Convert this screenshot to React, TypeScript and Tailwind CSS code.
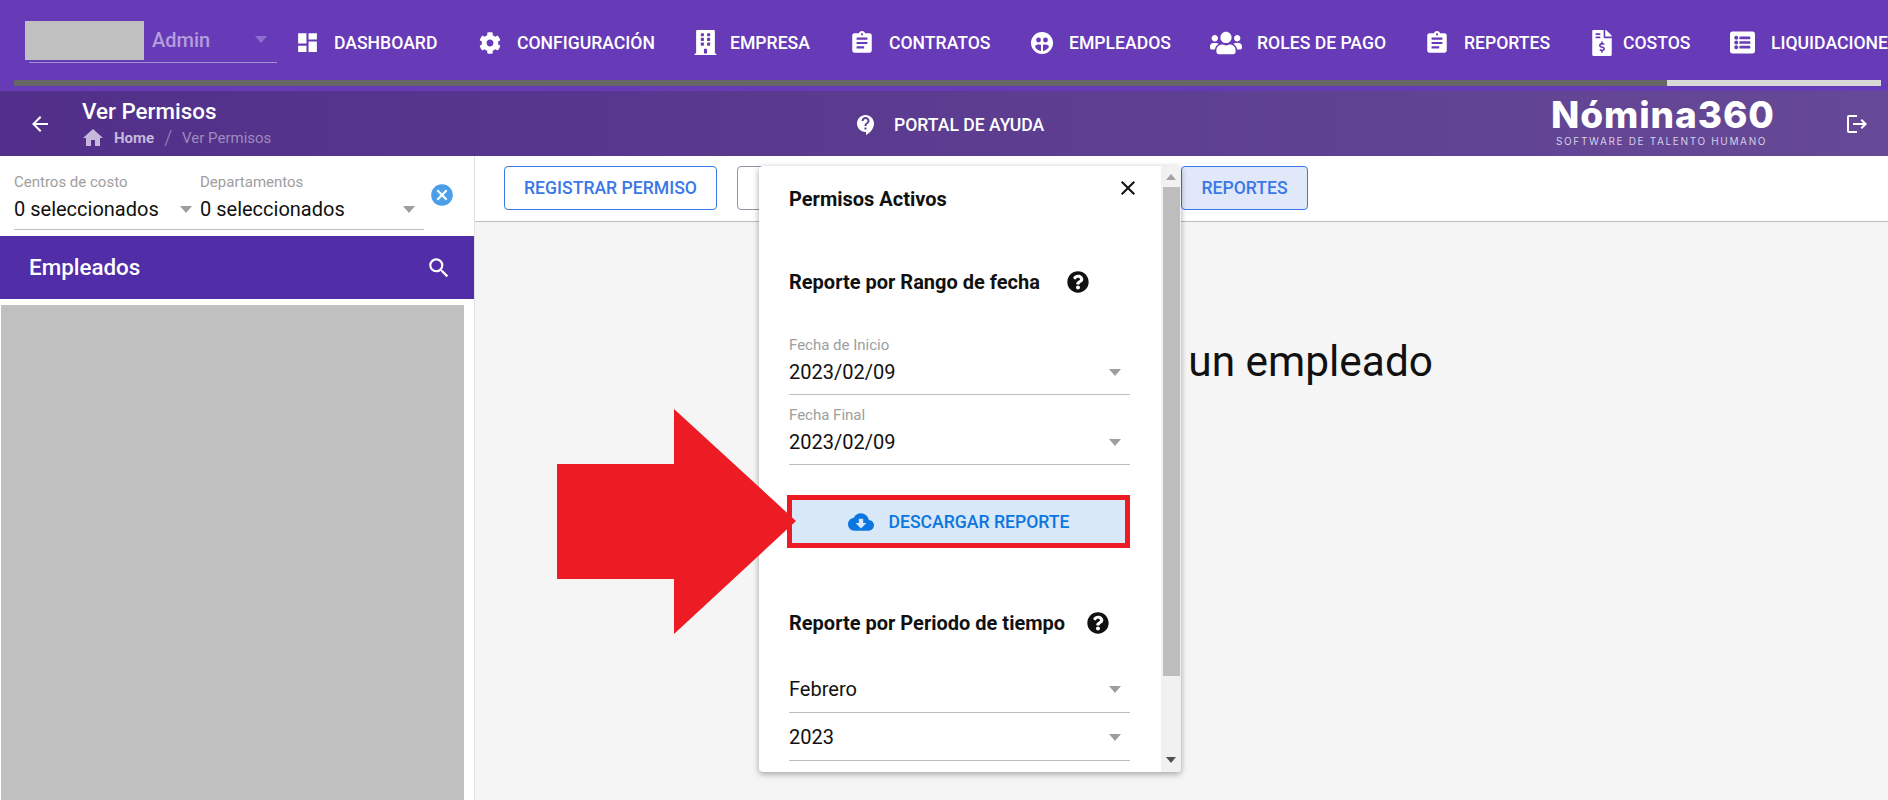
import {
  MdArrowBack,
  MdAssignment,
  MdCancel,
  MdClose,
  MdCloudDownload,
  MdContactSupport,
  MdDashboard,
  MdHome,
  MdLogout,
  MdSearch,
} from 'react-icons/md';
import { FaBuilding, FaCog, FaFileInvoiceDollar, FaListAlt, FaQuestionCircle, FaUsers } from 'react-icons/fa';

function Caret({ className = 'text-[#9e9e9e]' }: { className?: string }) {
  return (
    <svg width="12" height="7" viewBox="0 0 12 7" className={`shrink-0 ${className}`}>
      <polygon points="0,0 12,0 6,7" fill="currentColor" />
    </svg>
  );
}

function EmpleadosIcon() {
  return (
    <svg width="22" height="22" viewBox="0 0 22 22">
      <circle cx="11" cy="11" r="11" fill="#fff" />
      <circle cx="7.5" cy="8" r="2.4" fill="#673ab7" />
      <circle cx="14.5" cy="8" r="2.4" fill="#673ab7" />
      <path d="M4 14.5c1-2 4-2.5 6-1.5v6c-2.500-.5-5-2-6-4.500zM18 14.500c-1-2-4-2.500-6-1.500v6c2.500-.5 5-2 6-4.500z" fill="#673ab7" />
    </svg>
  );
}

const navItems = [
  { label: 'Dashboard', icon: <MdDashboard size={25} className="-ml-[3px]" />, box: 'w-[36px]', item: 'w-[181px]' },
  { label: 'Configuración', icon: <FaCog size={22} />, box: 'w-[38px]', item: 'w-[214px]' },
  { label: 'Empresa', icon: <FaBuilding size={25} />, box: 'w-[37px]', item: 'w-[159px]' },
  { label: 'Contratos', icon: <MdAssignment size={26} className="-ml-[3px]" />, box: 'w-[37px]', item: 'w-[179px]' },
  { label: 'Empleados', icon: <EmpleadosIcon />, box: 'w-[38px]', item: 'w-[179px]' },
  { label: 'Roles de pago', icon: <FaUsers size={32} />, box: 'w-[47px]', item: 'w-[217px]' },
  { label: 'Reportes', icon: <MdAssignment size={26} className="-ml-[3px]" />, box: 'w-[37px]', item: 'w-[162px]' },
  { label: 'Costos', icon: <FaFileInvoiceDollar size={26} />, box: 'w-[34px]', item: 'w-[141px]' },
  { label: 'Liquidaciones', icon: <FaListAlt size={25} />, box: 'w-[41px]', item: 'w-[160px]' },
];

function PopField({ label, value, top }: { label?: string; value: string; top: string }) {
  return (
    <div className={`${top} border-b border-[#bdbdbd]`}>
      {label && <div className="h-5 text-[15px] leading-5 text-[#9e9e9e]">{label}</div>}
      <div className={`flex h-6 items-center justify-between pr-[9px] text-xl text-[#111] ${label ? 'mt-[5px] mb-[10px]' : 'mb-[11px]'}`}>
        <span>{value}</span>
        <Caret />
      </div>
    </div>
  );
}

export default function App() {
  return (
    <div className="relative flex h-[800px] w-full flex-col overflow-hidden bg-[#f5f5f5] font-[family-name:Roboto,sans-serif]">
      {/* top nav */}
      <header className="h-[91px] shrink-0 bg-[#673ab7] text-white">
        <div className="flex h-[80px] overflow-hidden">
          <div className="mt-[21px] ml-[29px] flex h-[42px] w-[248px] shrink-0 items-start border-b border-[#a08fcf]">
            <div className="-ml-[4px] h-[39px] w-[119px] bg-[#c0c0c0]" />
            <span className="ml-2 text-xl leading-[38px] font-medium text-[#b39ddb]">Admin</span>
            <Caret className="mt-[15px] ml-[45px] text-[#8e6fd0]" />
          </div>
          <nav className="ml-[21px] flex shrink-0 items-center pt-[6px]">
            {navItems.map((n) => (
              <a key={n.label} className={`flex shrink-0 items-center ${n.item}`}>
                <span className={`flex shrink-0 items-center ${n.box}`}>{n.icon}</span>
                <span className="text-[17.6px] font-medium whitespace-nowrap uppercase">{n.label}</span>
              </a>
            ))}
          </nav>
        </div>
        <div className="mx-[14px] mr-[7px] flex h-[6px] justify-end bg-[#666]">
          <div className="h-full w-[214px] bg-[#d9d9d9]" />
        </div>
      </header>

      {/* page bar */}
      <div className="flex h-[65px] shrink-0 items-center bg-gradient-to-r from-[#512f8a] to-[#664996] text-white">
        <div className="flex w-[854px] shrink-0 items-center pl-7">
          <MdArrowBack size={24} />
          <div className="ml-[30px]">
            <h1 className="text-[22.4px] leading-6 font-medium">Ver Permisos</h1>
            <div className="mt-[5px] flex h-5 items-center text-[15px]">
              <MdHome size={24} className="-ml-[1px] text-[#c5b8dc]" />
              <span className="ml-[9px] font-bold text-[#c5b8dc]">Home</span>
              <span className="mx-[10px] text-xl font-light text-[#9e8abd]">/</span>
              <span className="text-[#9e8abd]">Ver Permisos</span>
            </div>
          </div>
        </div>
        <div className="mt-[3px] flex w-[697px] shrink-0 items-center">
          <MdContactSupport size={24} />
          <span className="ml-4 text-[17.6px] font-medium">PORTAL DE AYUDA</span>
        </div>
        <div className="flex w-[294px] shrink-0 flex-col pb-[5px] font-[family-name:Inter,sans-serif]">
          <span className="text-[37px] leading-[40px] font-extrabold tracking-[0.9px]">Nómina360</span>
          <span className="ml-[5px] text-[10px] leading-3 tracking-[1.65px] text-[#d8d0e6]">SOFTWARE DE TALENTO HUMANO</span>
        </div>
        <MdLogout size={24} />
      </div>

      <div className="flex min-h-0 flex-1">
        {/* left panel */}
        <aside className="flex w-[475px] shrink-0 flex-col border-r border-[#e0e0e0] bg-white">
          <div className="flex h-[80px] shrink-0 items-start pt-[16px]">
            <div className="ml-[14px] flex h-[58px] w-[410px] border-b border-[#bdbdbd]">
              <div className="w-[186px]">
                <div className="h-5 text-[15px] leading-5 text-[#9e9e9e]">Centros de costo</div>
                <div className="mt-[3px] flex h-7 items-center text-xl text-[#111]">
                  <span>0 seleccionados</span>
                  <Caret className="ml-[21px] text-[#9e9e9e]" />
                </div>
              </div>
              <div className="flex-1">
                <div className="h-5 text-[15px] leading-5 text-[#9e9e9e]">Departamentos</div>
                <div className="mt-[3px] flex h-7 items-center justify-between pr-[9px] text-xl text-[#111]">
                  <span>0 seleccionados</span>
                  <Caret />
                </div>
              </div>
            </div>
            <MdCancel size={26} className="mt-[10px] ml-[5px] text-[#4a9fe8]" />
          </div>
          <div className="flex h-[63px] shrink-0 items-center justify-between bg-[#512da8] pr-[22px] pl-[29px] text-white">
            <span className="text-[22.4px] font-medium">Empleados</span>
            <MdSearch size={26} />
          </div>
          <div className="mt-[6px] ml-px w-[463px] flex-1 bg-[#c0c0c0]" />
        </aside>

        {/* content */}
        <main className="flex min-w-0 flex-1 flex-col">
          <div className="flex h-[66px] shrink-0 items-start gap-[20px] border-b border-[#bdbdbd] bg-white pt-[10px] pl-[29px]">
            <button className="h-[44px] w-[213px] shrink-0 rounded border border-[#3b78e7] text-[17.6px] font-medium text-[#3b78e7]">
              REGISTRAR PERMISO
            </button>
            <button className="h-[44px] w-[424px] shrink-0 rounded border border-[#9b8fa8] text-[17.6px] font-medium text-[#3b78e7]" />
            <button className="h-[44px] w-[127px] shrink-0 rounded border border-[#3b78e7] bg-[#e0e8f9] text-[17.6px] font-medium text-[#3b78e7]">
              REPORTES
            </button>
          </div>
          <div className="flex justify-end pt-[116px] pr-[455px] text-[42.4px] leading-[48px] text-[#111]">Seleccione un empleado</div>
        </main>
      </div>

      {/* reportes popup */}
      <div className="absolute top-[166px] left-[759px] flex h-[606px] w-[422px] overflow-hidden rounded-sm bg-white shadow-[0_2px_6px_rgba(0,0,0,0.35)]">
        <div className="min-w-0 flex-1 pr-[31px] pl-[30px]">
          <div className="mt-[21px] flex h-6 items-start justify-between">
            <span className="text-xl leading-6 font-bold text-[#111]">Permisos Activos</span>
            <MdClose size={24} className="-mt-[11px] -mr-[10px] text-[#111]" />
          </div>
          <div className="mt-[59px] flex h-6 items-center">
            <span className="text-xl font-bold text-[#111]">Reporte por Rango de fecha</span>
            <FaQuestionCircle size={22} className="ml-[27px] text-[#111]" />
          </div>
          <PopField top="mt-[41px]" label="Fecha de Inicio" value="2023/02/09" />
          <PopField top="mt-[10px]" label="Fecha Final" value="2023/02/09" />
          <button className="mt-[30px] -ml-[2px] flex h-[53px] w-[343px] items-center justify-center gap-[15px] border-[5px] border-[#ed1c24] bg-[#d8e8f8] pt-px text-[17.6px] font-medium text-[#0b76e0]">
            <MdCloudDownload size={26} />
            DESCARGAR REPORTE
          </button>
          <div className="mt-[63px] flex h-6 items-center">
            <span className="text-xl font-bold text-[#111]">Reporte por Periodo de tiempo</span>
            <FaQuestionCircle size={22} className="ml-[22px] text-[#111]" />
          </div>
          <PopField top="mt-[42px]" value="Febrero" />
          <PopField top="mt-[12px]" value="2023" />
        </div>
        <div className="flex w-[20px] shrink-0 flex-col items-center bg-[#f1f1f1]">
          <div className="flex h-[21px] w-full items-center justify-center">
            <svg width="10" height="6" viewBox="0 0 10 6" className="text-[#a3a3a3]">
              <polygon points="5,0 10,6 0,6" fill="currentColor" />
            </svg>
          </div>
          <div className="h-[489px] w-[17px] bg-[#bdbdbd]" />
          <div className="flex flex-1 items-end pb-[9px]">
            <svg width="10" height="6" viewBox="0 0 10 6" className="text-[#505050]">
              <polygon points="0,0 10,0 5,6" fill="currentColor" />
            </svg>
          </div>
        </div>
      </div>

      {/* annotation arrow */}
      <svg width="239" height="225" viewBox="0 0 239 225" className="absolute top-[409px] left-[557px]">
        <polygon points="0,55 117,55 117,0 239,112 117,225 117,170 0,170" fill="#ed1c24" />
      </svg>
    </div>
  );
}
